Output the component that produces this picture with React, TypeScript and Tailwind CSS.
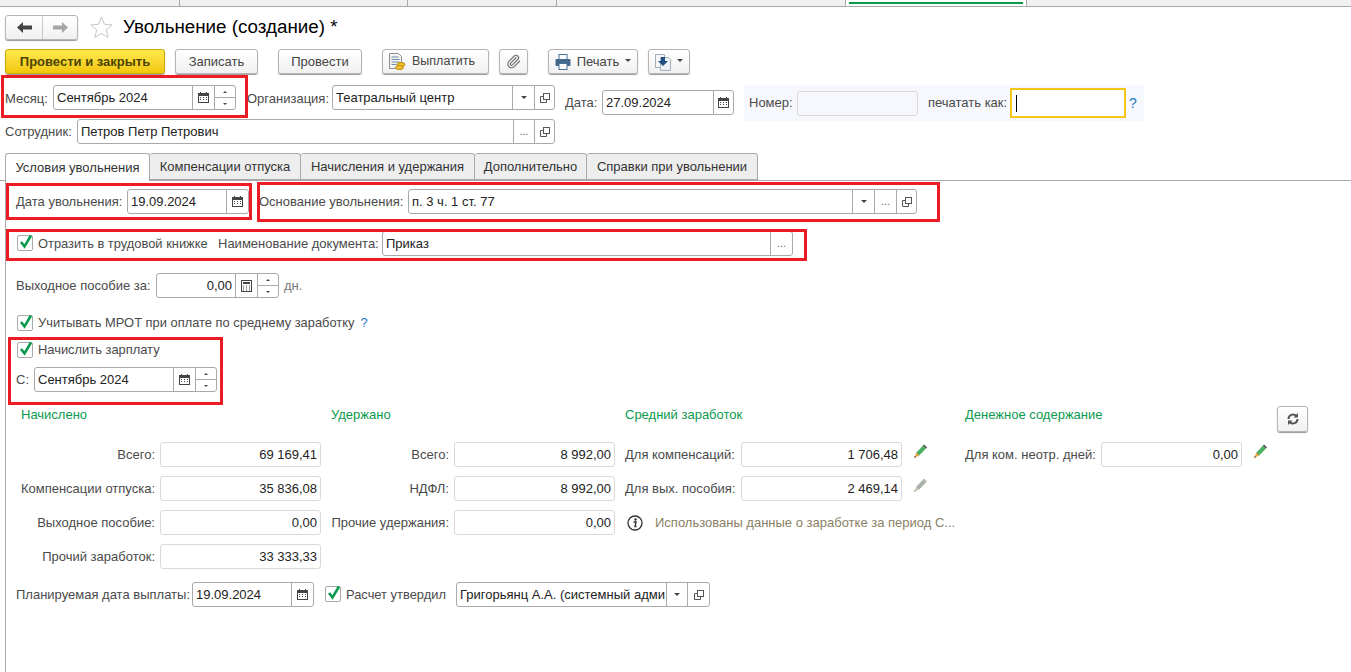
import { Paperclip } from "lucide-react";
import type { ReactNode } from "react";

function CalendarIcon() {
  return (
    <svg width="11" height="11" viewBox="0 0 11 11">
      <rect x="0.5" y="1.5" width="10" height="9" fill="#fff" stroke="#444" />
      <rect x="0" y="1" width="11" height="3" fill="#444" />
      <rect x="2" y="0" width="1" height="2" fill="#444" />
      <rect x="8" y="0" width="1" height="2" fill="#444" />
      <path d="M2 5.5h1M5 5.5h1M8 5.5h1M2 7.5h1M5 7.5h1M8 7.5h1" stroke="#444" />
    </svg>
  );
}

function CalcIcon() {
  return (
    <svg width="11" height="12" viewBox="0 0 11 12">
      <rect x="0.5" y="0.5" width="10" height="11" fill="#fff" stroke="#444" />
      <rect x="2" y="2" width="7" height="2" fill="#444" />
      <path d="M2 6h1M5 6h1M8 6h1M2 8h1M5 8h1M8 8h1M2 10h1M5 10h1M8 10h1" stroke="#444" />
    </svg>
  );
}

function Triangle() {
  return (
    <svg width="6" height="3" viewBox="0 0 6 3">
      <path d="M0 0h6L3 3z" fill="#444" />
    </svg>
  );
}

function OpenIcon() {
  return (
    <svg width="10" height="10" viewBox="0 0 10 10" fill="none" stroke="#555">
      <rect x="3.5" y="0.5" width="6" height="6" fill="#fff" />
      <path d="M3.5 3.5h-3v6h6v-3" />
    </svg>
  );
}

function Spin() {
  return (
    <div className="flex w-[21px] flex-col self-stretch border-l border-[#a9a9a9]">
      <div className="flex flex-1 items-center justify-center border-b border-[#a9a9a9]">
        <svg width="4" height="2" viewBox="0 0 4 2">
          <path d="M2 0l2 2H0z" fill="#444" />
        </svg>
      </div>
      <div className="flex flex-1 items-center justify-center">
        <svg width="4" height="2" viewBox="0 0 4 2">
          <path d="M0 0h4L2 2z" fill="#444" />
        </svg>
      </div>
    </div>
  );
}

function Cell({ children, className = "w-[22px]" }: { children: ReactNode; className?: string }) {
  return (
    <div className={`flex items-center justify-center self-stretch border-l border-[#a9a9a9] ${className}`}>
      {children}
    </div>
  );
}

function Dots() {
  return <span className="text-[11px] text-[#666]">...</span>;
}

function Field({
  className,
  value,
  right,
  children,
}: {
  className: string;
  value?: string;
  right?: boolean;
  children?: ReactNode;
}) {
  return (
    <div className={`flex h-[25px] shrink-0 items-center rounded-[3px] border border-[#a9a9a9] bg-white ${className}`}>
      <div
        className={`min-w-0 flex-1 overflow-hidden whitespace-nowrap px-[3px] text-[#222] ${right ? "text-right" : ""}`}
      >
        {value}
      </div>
      {children}
    </div>
  );
}

function ReadOnly({ value }: { value: string }) {
  return (
    <div className="flex h-[25px] flex-1 items-center justify-end rounded-[3px] border border-[#d9d9d9] bg-white px-[3px] text-[#222]">
      {value}
    </div>
  );
}

function Check({ label, className = "" }: { label: string; className?: string }) {
  return (
    <div className={`flex items-center ${className}`}>
      <div className="relative h-[16px] w-[16px] rounded-[2px] border border-[#a9a9a9] bg-white">
        <svg className="absolute left-[1px] -top-[3px]" width="14" height="17" viewBox="0 0 14 17">
          <path d="M2 9l3.5 4.5L12 2.5" fill="none" stroke="#0b9a4e" strokeWidth="2.6" />
        </svg>
      </div>
      <span className="ml-[5px] whitespace-nowrap text-[12.9px] text-[#4a4a4a]">{label}</span>
    </div>
  );
}

function Btn({ children, className }: { children: ReactNode; className: string }) {
  return (
    <div
      className={`flex h-[25px] shrink-0 items-center justify-center rounded-[3px] border border-[#b5b5b5] bg-gradient-to-b from-white to-[#f1f1f1] text-[#444] shadow-[0_1px_1px_#9a9a9a] ${className}`}
    >
      {children}
    </div>
  );
}

function Pencil({ muted }: { muted?: boolean }) {
  return (
    <svg width="14" height="15" viewBox="0 0 14 15">
      <path d="M3.5 8.5L10 1.5l3 3-6.8 7-3.2-.5z" fill={muted ? "#a9b3aa" : "#4caf5f"} />
      <path d="M10 1.5l1-1 3 3-1 1z" fill={muted ? "#b5b5b5" : "#444"} />
      <path d="M3.5 8.5L1 14l5.2-2.5z" fill={muted ? "#c9c4b4" : "#e8a24a"} />
      <path d="M1 14l.9-2 1.1 1.1z" fill={muted ? "#999" : "#333"} />
    </svg>
  );
}

function Red({ className }: { className: string }) {
  return <div className={`pointer-events-none absolute border-[3px] border-[#ed1c24] ${className}`} />;
}

const accrued = [
  ["Всего:", "69 169,41"],
  ["Компенсации отпуска:", "35 836,08"],
  ["Выходное пособие:", "0,00"],
  ["Прочий заработок:", "33 333,33"],
];

const withheld = [
  ["Всего:", "8 992,00"],
  ["НДФЛ:", "8 992,00"],
  ["Прочие удержания:", "0,00"],
];

const tabs = ["Компенсации отпуска", "Начисления и удержания", "Дополнительно", "Справки при увольнении"];
const tabWidths = ["w-[151px]", "w-[174px]", "w-[112px]", "w-[171px]"];

export default function App() {
  return (
    <div className="relative flex h-[672px] w-[1351px] flex-col overflow-hidden bg-white font-['Liberation_Sans',sans-serif] text-[13px] text-[#4a4a4a]">
      {/* Section tabs, cut off by the screenshot */}
      <div className="flex h-[7px] shrink-0 border-b border-[#a9a9a9] bg-[#f0f0f0]">
        <div className="w-[180px] border-r border-[#a9a9a9]" />
        <div className="w-[228px] border-r border-[#a9a9a9]" />
        <div className="w-[149px] border-r border-[#a9a9a9]" />
        <div className="w-[289px] border-r border-[#a9a9a9]" />
        <div className="w-[181px] border-r border-[#a9a9a9] bg-white px-[3px]">
          <div className="mt-[2px] h-[2px] bg-[#0b9a4e]" />
        </div>
      </div>

      {/* Title */}
      <div className="mt-[8px] flex h-[25px] shrink-0 items-center pl-[5px]">
        <div className="flex h-[25px] w-[73px] rounded-[3px] border border-[#b5b5b5] bg-gradient-to-b from-white to-[#f1f1f1] shadow-[0_1px_1px_#9a9a9a]">
          <div className="flex w-[37px] items-center justify-center border-r border-[#c9c9c9]">
            <svg width="15" height="11" viewBox="0 0 15 11">
              <path d="M0 5.5L6 0v3.5h9v4H6V11z" fill="#444" />
            </svg>
          </div>
          <div className="flex flex-1 items-center justify-center">
            <svg width="15" height="11" viewBox="0 0 15 11">
              <path d="M15 5.5L9 0v3.5H0v4h9V11z" fill="#a5a5a5" />
            </svg>
          </div>
        </div>
        <svg className="ml-[12px]" width="23" height="23" viewBox="0 0 23 23">
          <path
            d="M11.5 1l3 7.3 7.7.6-5.9 5 1.9 7.6-6.7-4.100-6.700 4.100 1.900-7.600-5.900-5 7.700-.6z"
            fill="#fff"
            stroke="#c4c8cc"
          />
        </svg>
        <div className="ml-[10px] text-[18.8px] text-black">Увольнение (создание) *</div>
      </div>

      {/* Toolbar */}
      <div className="mt-[9px] flex h-[26px] shrink-0 pl-[5px]">
        <div className="flex h-[25px] w-[160px] items-center justify-center rounded-[3px] border border-[#c9a800] bg-gradient-to-b from-[#ffe94a] to-[#f2c700] font-bold text-[#4d4400] shadow-[0_1px_1px_#9a9a9a]">
          Провести и закрыть
        </div>
        <Btn className="ml-[10px] w-[83px]">Записать</Btn>
        <Btn className="ml-[20px] w-[84px]">Провести</Btn>
        <Btn className="ml-[20px] w-[107px] !justify-start pl-[5px]">
          <svg width="18" height="18" viewBox="0 0 18 18">
            <path d="M1.5.5h9l3 3v12h-12z" fill="#f4f4ee" stroke="#8a8f96" />
            <path d="M3.5 4h7M3.5 6.500h8M3.5 9h8M3.5 11.500h5" stroke="#6f8fb0" />
            <ellipse cx="13" cy="11.500" rx="4" ry="2" fill="#f5c02c" stroke="#b98a10" />
            <ellipse cx="11.500" cy="14.500" rx="4" ry="2" fill="#f5c02c" stroke="#b98a10" />
          </svg>
          <span className="ml-[6px] text-[12.5px]">Выплатить</span>
        </Btn>
        <Btn className="ml-[10px] w-[29px]">
          <Paperclip size={15} color="#777" strokeWidth={2} />
        </Btn>
        <Btn className="ml-[20px] w-[90px]">
          <svg width="16" height="16" viewBox="0 0 16 16">
            <rect x="4" y="0.5" width="8" height="5" fill="#fff" stroke="#4b6f94" />
            <rect x="0.5" y="5" width="15" height="7" rx="1" fill="#44688c" />
            <rect x="4" y="9.500" width="8" height="6" fill="#fff" stroke="#4b6f94" />
          </svg>
          <span className="ml-[6px]">Печать</span>
          <span className="ml-[6px] mb-[3px]">
            <Triangle />
          </span>
        </Btn>
        <Btn className="ml-[10px] w-[42px]">
          <svg width="16" height="18" viewBox="0 0 16 18">
            <path d="M.5 1.500h9v13h-9z" fill="#f4f6f8" stroke="#a5b0bb" />
            <path d="M5.500 4.500h8l2 2v11h-10z" fill="#eef2f6" stroke="#a5b0bb" />
            <path d="M6 4h4v4h3l-5 5-5-5h3z" fill="#1f4f80" />
          </svg>
          <span className="ml-[6px] mb-[3px]">
            <Triangle />
          </span>
        </Btn>
      </div>

      {/* Month, organization, date */}
      <div className="mt-[10px] flex h-[34px] shrink-0 items-start pl-[5px]">
        <span className="mt-[4px] w-[48px]">Месяц:</span>
        <Field className="w-[183px]" value="Сентябрь 2024">
          <Cell>
            <CalendarIcon />
          </Cell>
          <Spin />
        </Field>
        <span className="ml-[11px] mt-[4px] w-[85px]">Организация:</span>
        <Field className="w-[223px]" value="Театральный центр">
          <Cell>
            <Triangle />
          </Cell>
          <Cell className="w-[20px]">
            <OpenIcon />
          </Cell>
        </Field>
        <span className="ml-[10px] mt-[8px] w-[37px]">Дата:</span>
        <Field className="mt-[5px] w-[132px]" value="27.09.2024">
          <Cell className="w-[20px]">
            <CalendarIcon />
          </Cell>
        </Field>
        <div className="ml-[10px] flex h-[36px] w-[400px] shrink-0 items-center bg-[#f7f8fd] pl-[5px]">
          <span className="w-[48px]">Номер:</span>
          <div className="h-[25px] w-[121px] rounded-[3px] border border-[#d9d9d9] bg-[#f7f8fd]" />
          <span className="ml-[10px] w-[82px] whitespace-nowrap">печатать как:</span>
          <div className="flex h-[30px] w-[116px] items-center border-2 border-[#f5c518] bg-white pl-[4px]">
            <div className="h-[17px] w-px bg-black" />
          </div>
          <span className="ml-[3px] text-[14px] text-[#1f7ac4]">?</span>
        </div>
      </div>

      {/* Employee */}
      <div className="flex h-[25px] shrink-0 items-center pl-[5px]">
        <span className="w-[72px]">Сотрудник:</span>
        <Field className="w-[478px]" value="Петров Петр Петрович">
          <Cell className="w-[21px]">
            <Dots />
          </Cell>
          <Cell className="w-[20px]">
            <OpenIcon />
          </Cell>
        </Field>
      </div>

      {/* Tabs */}
      <div className="mt-[9px] flex h-[28px] shrink-0 items-end border-b border-[#a9a9a9] pl-[5px]">
        <div className="relative top-px flex h-[28px] w-[145px] items-center justify-center rounded-t-[3px] border border-b-0 border-[#a9a9a9] bg-white text-[#333]">
          Условия увольнения
        </div>
        {tabs.map((tab, i) => (
          <div
            key={tab}
            className={`flex h-[27px] items-center justify-center whitespace-nowrap rounded-t-[3px] border border-l-0 border-[#a9a9a9] bg-[#eeeeee] text-[#333] ${tabWidths[i]}`}
          >
            {tab}
          </div>
        ))}
      </div>

      {/* Tab body */}
      <div className="ml-[5px] flex min-h-0 flex-1 flex-col border-l border-[#a9a9a9] pl-[10px]">
        <div className="mt-[8px] flex h-[25px] shrink-0 items-center">
          <span className="w-[111px] whitespace-nowrap">Дата увольнения:</span>
          <Field className="w-[122px]" value="19.09.2024">
            <Cell>
              <CalendarIcon />
            </Cell>
          </Field>
          <span className="ml-[10px] w-[149px] whitespace-nowrap">Основание увольнения:</span>
          <Field className="w-[509px]" value="п. 3 ч. 1 ст. 77">
            <Cell>
              <Triangle />
            </Cell>
            <Cell>
              <Dots />
            </Cell>
            <Cell className="w-[20px]">
              <OpenIcon />
            </Cell>
          </Field>
        </div>

        <div className="mt-[17px] flex h-[25px] shrink-0 items-center">
          <Check label="Отразить в трудовой книжке" className="ml-[1px] w-[201px]" />
          <span className="w-[164px] whitespace-nowrap">Наименование документа:</span>
          <Field className="w-[411px]" value="Приказ">
            <Cell>
              <Dots />
            </Cell>
          </Field>
        </div>

        <div className="mt-[17px] flex h-[25px] shrink-0 items-center">
          <span className="w-[140px] whitespace-nowrap">Выходное пособие за:</span>
          <Field className="w-[123px]" value="0,00" right>
            <Cell>
              <CalcIcon />
            </Cell>
            <Spin />
          </Field>
          <span className="ml-[5px] text-[#777]">дн.</span>
        </div>

        <div className="mt-[17px] flex h-[16px] shrink-0 items-center">
          <Check label="Учитывать МРОТ при оплате по среднему заработку" className="ml-[1px]" />
          <span className="ml-[6px] text-[#1f7ac4]">?</span>
        </div>

        <Check label="Начислить зарплату" className="ml-[1px] mt-[11px] h-[16px] shrink-0" />

        <div className="mt-[9px] flex h-[25px] shrink-0 items-center">
          <span className="w-[18px]">С:</span>
          <Field className="w-[183px]" value="Сентябрь 2024">
            <Cell>
              <CalendarIcon />
            </Cell>
            <Spin />
          </Field>
        </div>

        {/* Totals */}
        <div className="mt-[13px] flex h-[164px] shrink-0">
          <div className="w-[305px]">
            <div className="ml-[5px] h-[37px] text-[#0b9a4e]">Начислено</div>
            <div className="flex flex-col gap-[9px]">
              {accrued.map(([label, value]) => (
                <div key={label} className="flex items-center">
                  <span className="w-[144px] whitespace-nowrap pr-[5px] text-right">{label}</span>
                  <ReadOnly value={value} />
                </div>
              ))}
            </div>
          </div>

          <div className="ml-[10px] w-[284px]">
            <div className="h-[37px] text-[#0b9a4e]">Удержано</div>
            <div className="flex flex-col gap-[9px]">
              {withheld.map(([label, value]) => (
                <div key={label} className="flex items-center">
                  <span className="w-[123px] whitespace-nowrap pr-[5px] text-right">{label}</span>
                  <ReadOnly value={value} />
                </div>
              ))}
            </div>
          </div>

          <div className="ml-[10px] w-[302px]">
            <div className="h-[37px] text-[#0b9a4e]">Средний заработок</div>
            <div className="flex flex-col gap-[9px]">
              <div className="flex items-center">
                <span className="w-[116px] whitespace-nowrap">Для компенсаций:</span>
                <div className="flex w-[161px]">
                  <ReadOnly value="1 706,48" />
                </div>
                <span className="mb-[6px] ml-[11px]">
                  <Pencil />
                </span>
              </div>
              <div className="flex items-center">
                <span className="w-[116px] whitespace-nowrap">Для вых. пособия:</span>
                <div className="flex w-[161px]">
                  <ReadOnly value="2 469,14" />
                </div>
                <span className="mb-[6px] ml-[11px]">
                  <Pencil muted />
                </span>
              </div>
              <div className="flex h-[25px] items-center whitespace-nowrap">
                <svg className="ml-[2px] shrink-0" width="16" height="16" viewBox="0 0 16 16">
                  <circle cx="8" cy="8" r="7" fill="#fff" stroke="#333" strokeWidth="1.3" />
                  <circle cx="8.500" cy="4.500" r="1.200" fill="#333" />
                  <path d="M6.500 7h2.500l-1 4.500h1.500" fill="none" stroke="#333" strokeWidth="1.400" />
                </svg>
                <span className="ml-[12px] text-[#8a7f66]">Использованы данные о заработке за период С...</span>
              </div>
            </div>
          </div>

          <div className="ml-[38px] w-[302px]">
            <div className="h-[37px] text-[#0b9a4e]">Денежное содержание</div>
            <div className="flex items-center">
              <span className="w-[136px] whitespace-nowrap">Для ком. неотр. дней:</span>
              <div className="flex w-[141px]">
                <ReadOnly value="0,00" />
              </div>
              <span className="mb-[6px] ml-[11px]">
                <Pencil />
              </span>
            </div>
          </div>

          <Btn className="ml-[10px] mt-px h-[26px] w-[31px]">
            <svg width="12" height="12" viewBox="0 0 12 12" fill="none" stroke="#555" strokeWidth="2">
              <path d="M1.500 6a4.500 4.500 0 0 1 7.700-3.200" />
              <path d="M10.500 6a4.500 4.500 0 0 1-7.700 3.200" />
              <path d="M11 0v4.500H6.500z" fill="#555" stroke="none" />
              <path d="M1 12V7.500h4.500z" fill="#555" stroke="none" />
            </svg>
          </Btn>
        </div>

        {/* Payment date */}
        <div className="mt-[13px] flex h-[25px] shrink-0 items-center">
          <span className="w-[176px] whitespace-nowrap">Планируемая дата выплаты:</span>
          <Field className="w-[122px]" value="19.09.2024">
            <Cell>
              <CalendarIcon />
            </Cell>
          </Field>
          <Check label="Расчет утвердил" className="ml-[11px] w-[131px]" />
          <Field className="w-[254px]" value="Григорьянц А.А. (системный адми">
            <Cell className="w-[21px]">
              <Triangle />
            </Cell>
            <Cell>
              <OpenIcon />
            </Cell>
          </Field>
        </div>
      </div>

      {/* Red marks drawn over the form */}
      <Red className="left-[1px] top-[75px] h-[43px] w-[247px]" />
      <Red className="left-[6px] top-[183px] h-[37px] w-[246px]" />
      <Red className="left-[257px] top-[182px] h-[40px] w-[683px]" />
      <Red className="left-[6px] top-[229px] h-[32px] w-[801px]" />
      <Red className="left-[8px] top-[337px] h-[68px] w-[215px]" />
    </div>
  );
}
